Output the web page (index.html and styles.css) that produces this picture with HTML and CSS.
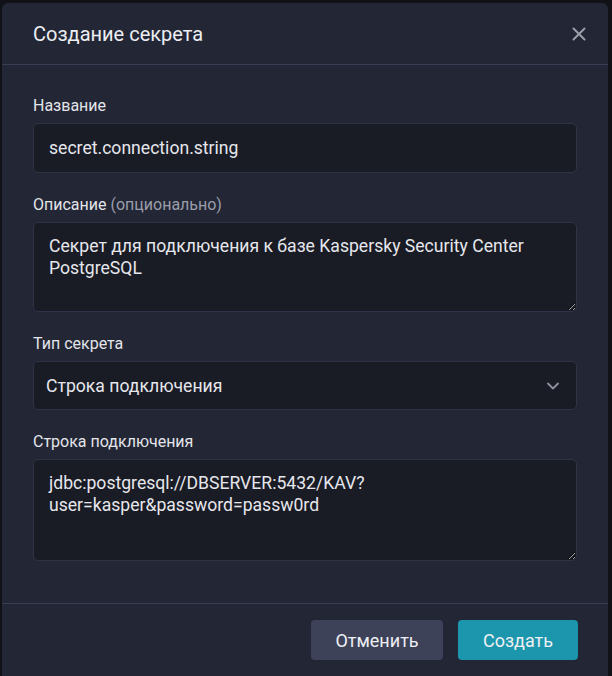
FILE: index.html
```html
<!DOCTYPE html>
<html lang="ru">
<head>
  <meta charset="UTF-8">
  <title>Создание секрета</title>
  <link rel="stylesheet" href="styles.css">
</head>
<body>

  <div class="dialog">
    <div class="dialog-header">
      <h2 class="dialog-title">Создание секрета</h2>
      <button class="close-btn" aria-label="Закрыть">
        <svg width="14" height="14" viewBox="0 0 14 14">
          <path d="M1.5 1.5 L12.5 12.5 M12.5 1.5 L1.5 12.5" stroke="#9a9eab" stroke-width="2" stroke-linecap="round" fill="none"/>
        </svg>
      </button>
    </div>

    <div class="dialog-body">
      <div class="field">
        <label class="label">Название</label>
        <input class="input" type="text" value="secret.connection.string">
      </div>

      <div class="field">
        <label class="label">Описание <span class="optional">(опционально)</span></label>
        <textarea class="textarea">Секрет для подключения к базе Kaspersky Security Center PostgreSQL</textarea>
      </div>

      <div class="field">
        <label class="label">Тип секрета</label>
        <div class="select">
          <span>Строка подключения</span>
          <svg width="14" height="10" viewBox="0 0 14 10">
            <path d="M2 2.5 L7 7.5 L12 2.5" stroke="#8d91a0" stroke-width="1.8" fill="none" stroke-linecap="round" stroke-linejoin="round"/>
          </svg>
        </div>
      </div>

      <div class="field">
        <label class="label">Строка подключения</label>
        <textarea class="textarea tall">jdbc:postgresql://DBSERVER:5432/KAV?user=kasper&amp;password=passw0rd</textarea>
      </div>
    </div>

    <div class="dialog-footer">
      <button class="btn btn-secondary">Отменить</button>
      <button class="btn btn-primary">Создать</button>
    </div>
  </div>

</body>
</html>
```

FILE: styles.css
```css
html, body {
  margin: 0;
  padding: 0;
  height: 100%;
}

body {
  background: #111217;
  font-family: Roboto, "Liberation Sans", sans-serif;
  color: #e6e7ec;
  padding: 3px 4px 0 2px;
  box-sizing: border-box;
  overflow: hidden;
}

.dialog {
  background: #232634;
  border-radius: 6px 6px 0 0;
  height: 700px;
}

.dialog-header {
  height: 61px;
  border-bottom: 1px solid #393e54;
  display: flex;
  align-items: center;
  justify-content: space-between;
  padding: 0 22px 0 31px;
}

.dialog-title {
  margin: 0;
  font-size: 20px;
  font-weight: 400;
  color: #eceef3;
}

.close-btn {
  background: none;
  border: 0;
  padding: 0;
  display: flex;
  cursor: pointer;
}

.dialog-body {
  padding: 30px 31px 42px 31px;
}

.field {
  margin-bottom: 21px;
}

.field:last-child {
  margin-bottom: 0;
}

.label {
  display: block;
  font-size: 16px;
  font-weight: 400;
  line-height: 22px;
  margin-bottom: 6px;
  color: #e3e5eb;
}

.optional {
  color: #9a9eab;
}

.input,
.textarea,
.select {
  width: 100%;
  box-sizing: border-box;
  background: #191b25;
  border: 1px solid #2f3345;
  border-radius: 5px;
  color: #e6e7ec;
  font-family: Roboto, "Liberation Sans", sans-serif;
  font-size: 17.6px;
  outline: none;
  color-scheme: dark;
}

.input {
  height: 50px;
  padding: 0 15px;
}

.textarea {
  display: block;
  height: 90px;
  padding: 12px 15px;
  line-height: 22px;
  resize: vertical;
}

.textarea.tall {
  height: 102px;
}

.select {
  height: 49px;
  display: flex;
  align-items: center;
  justify-content: space-between;
  padding: 0 16px 0 12px;
}

.dialog-footer {
  border-top: 1px solid #393e54;
  display: flex;
  justify-content: flex-end;
  gap: 15px;
  padding: 16px 30px 0 0;
}

.btn {
  height: 40px;
  border: 0;
  border-radius: 4px;
  font-family: Roboto, "Liberation Sans", sans-serif;
  font-size: 18px;
  color: #eef0f4;
  cursor: pointer;
}

.btn-secondary {
  width: 132px;
  background: #3d4259;
}

.btn-primary {
  width: 120px;
  background: #1b96ad;
}
```
